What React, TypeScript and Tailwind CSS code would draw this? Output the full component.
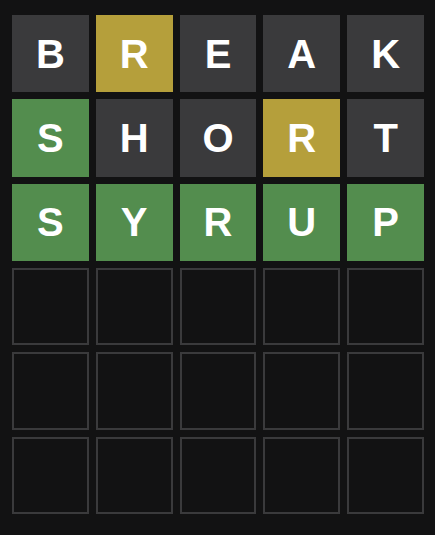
const rows: { letter: string; state: "absent" | "present" | "correct" }[][] = [
  [
    { letter: "B", state: "absent" },
    { letter: "R", state: "present" },
    { letter: "E", state: "absent" },
    { letter: "A", state: "absent" },
    { letter: "K", state: "absent" },
  ],
  [
    { letter: "S", state: "correct" },
    { letter: "H", state: "absent" },
    { letter: "O", state: "absent" },
    { letter: "R", state: "present" },
    { letter: "T", state: "absent" },
  ],
  [
    { letter: "S", state: "correct" },
    { letter: "Y", state: "correct" },
    { letter: "R", state: "correct" },
    { letter: "U", state: "correct" },
    { letter: "P", state: "correct" },
  ],
];

const stateClass = {
  absent: "bg-[#3a3a3c]",
  present: "bg-[#b59f3b]",
  correct: "bg-[#538d4e]",
};

function Tile({ letter, state }: { letter?: string; state?: keyof typeof stateClass }) {
  if (!letter || !state) {
    return <div className="border-2 border-[#3a3a3c]" />;
  }
  return (
    <div
      className={`flex items-center justify-center text-[40px] font-bold leading-none text-white ${stateClass[state]}`}
    >
      {letter}
    </div>
  );
}

export default function App() {
  const cells = Array.from({ length: 30 }, (_, i) => rows[Math.floor(i / 5)]?.[i % 5]);

  return (
    <div className="h-[535px] w-[435px] bg-[#121213] pl-[12px] pt-[15px] font-['Liberation_Sans',Arial,sans-serif]">
      <div className="grid h-[499px] w-[412px] grid-cols-5 grid-rows-6 gap-[7px]">
        {cells.map((cell, i) => (
          <Tile key={i} letter={cell?.letter} state={cell?.state} />
        ))}
      </div>
    </div>
  );
}
